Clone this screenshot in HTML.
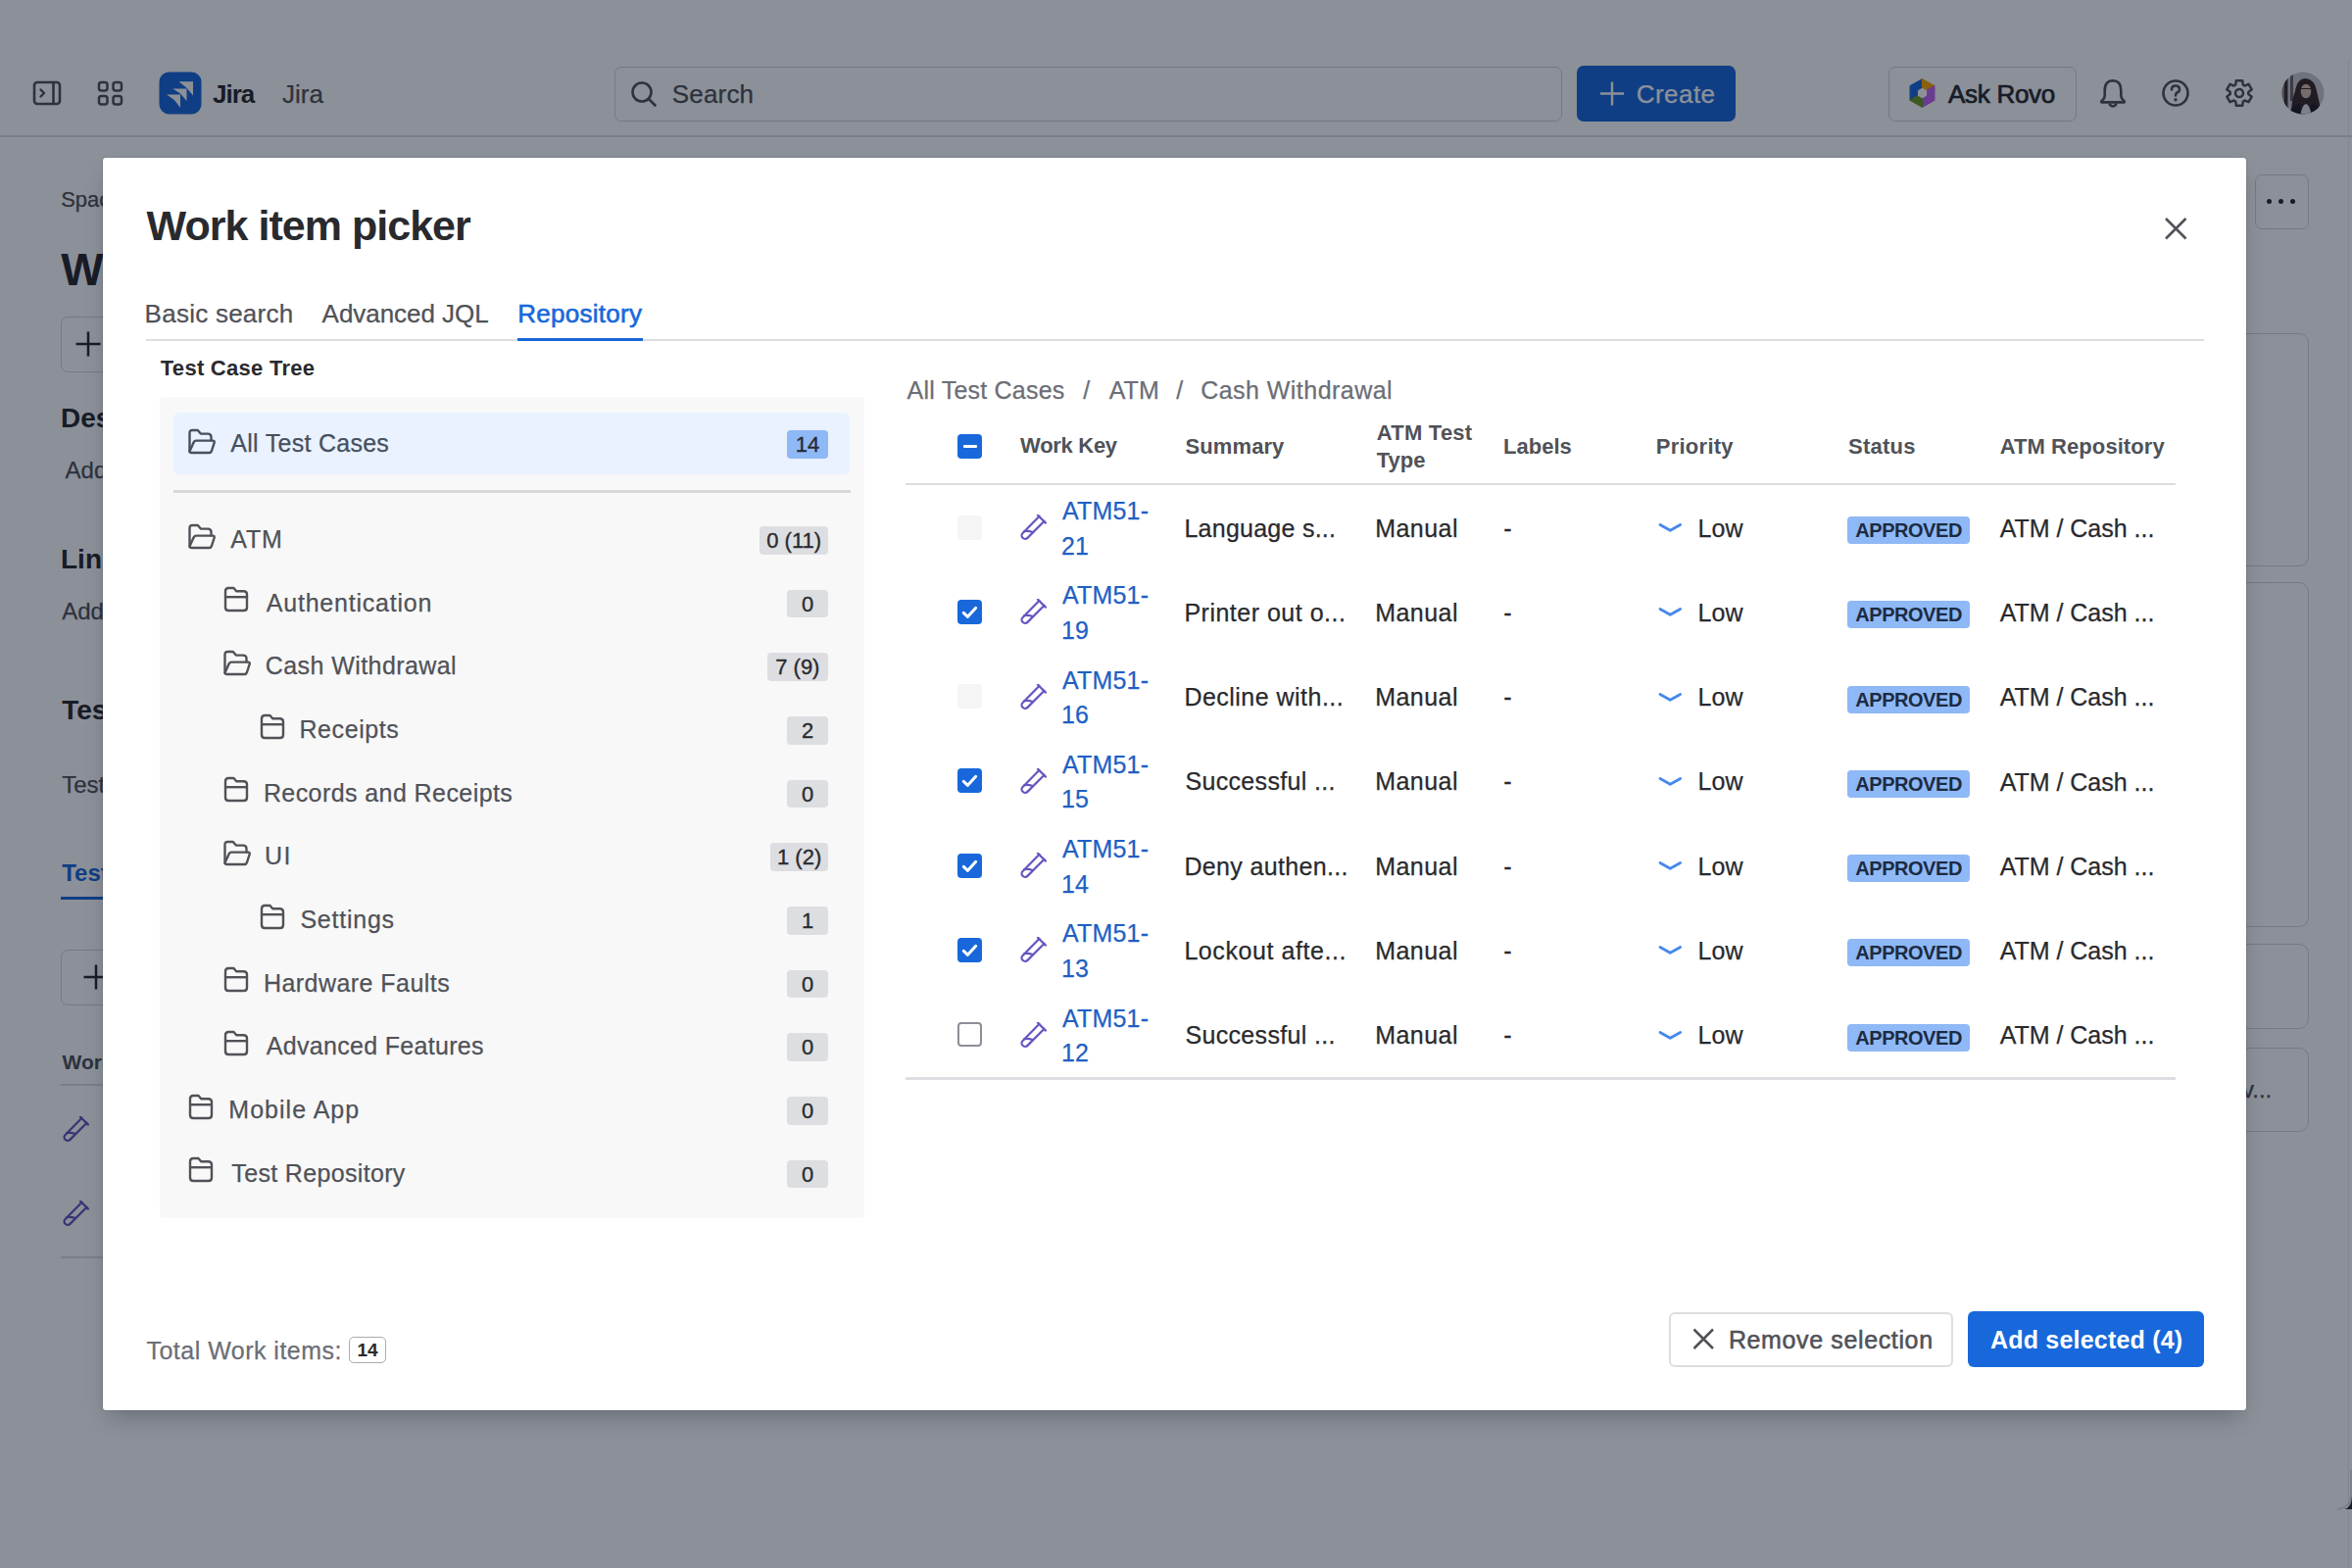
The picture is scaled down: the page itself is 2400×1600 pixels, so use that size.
<!DOCTYPE html><html><head><meta charset="utf-8"><title>Work item picker</title><style>
*{margin:0;padding:0;box-sizing:border-box}
html,body{width:2400px;height:1600px;overflow:hidden}
body{position:relative;background:#fff;font-family:"Liberation Sans",sans-serif}
.a{position:absolute;white-space:nowrap}
.b{position:absolute;display:block}
</style></head><body>
<div class="b" style="left:0.0px;top:138.0px;width:2400.0px;height:2.0px;background:#DDDEE1"></div>
<svg class="b" style="left:32.0px;top:81.0px" width="32" height="28" viewBox="0 0 32 28"><rect x="3" y="3" width="26" height="22" rx="3" fill="none" stroke="#505258" stroke-width="2.6"/><path d="M22.5 3v22" stroke="#505258" stroke-width="2.6"/><path d="M9.5 10.5l3.5 3.5-3.5 3.5" fill="none" stroke="#505258" stroke-width="2.4" stroke-linecap="round" stroke-linejoin="round"/></svg>
<svg class="b" style="left:98.0px;top:81.0px" width="30" height="30" viewBox="0 0 30 30"><rect x="3" y="3" width="8.5" height="8.5" rx="2.5" fill="none" stroke="#505258" stroke-width="2.5"/><rect x="3" y="17" width="8.5" height="8.5" rx="2.5" fill="none" stroke="#505258" stroke-width="2.5"/><rect x="17.5" y="3" width="8.5" height="8.5" rx="2.5" fill="none" stroke="#505258" stroke-width="2.5"/><rect x="17.5" y="17" width="8.5" height="8.5" rx="2.5" fill="none" stroke="#505258" stroke-width="2.5"/></svg>
<svg class="b" style="left:162.0px;top:73.0px" width="44" height="44" viewBox="0 0 44 44"><rect x="0.5" y="0.5" width="43" height="43" rx="10" fill="#1868DB"/><path d="M20.5 10.2H35V24.5L28.5 16.8Z" fill="#fff"/><path d="M14.3 17.4H28.5V30L22 22.6Z" fill="#fff"/><path d="M8 23.6H22V36.7L15.8 29Z" fill="#fff"/></svg>
<div class="a" style="left:217.0px;top:82.6px;font-size:26px;line-height:26px;color:#292A2E;font-weight:700;letter-spacing:-1.00px;">Jira</div>
<div class="a" style="left:288.0px;top:82.6px;font-size:26px;line-height:26px;color:#505258;-webkit-text-stroke:0.25px #505258;">Jira</div>
<div class="b" style="left:627.0px;top:68.0px;width:967.0px;height:56.0px;border:1.5px solid #D3D5D9;border-radius:7px;background:#fff"></div>
<svg class="b" style="left:642.0px;top:81.0px" width="30" height="30" viewBox="0 0 30 30"><circle cx="13" cy="13" r="9.5" fill="none" stroke="#505258" stroke-width="2.6"/><path d="M20 20l6.5 6.5" stroke="#505258" stroke-width="2.6" stroke-linecap="round"/></svg>
<div class="a" style="left:685.7px;top:82.7px;font-size:26px;line-height:26px;color:#505258;letter-spacing:0.20px;-webkit-text-stroke:0.25px #505258;">Search</div>
<div class="b" style="left:1609.0px;top:67.0px;width:162.0px;height:57.0px;background:#1868DB;border-radius:7px"></div>
<svg class="b" style="left:1630.0px;top:81.0px" width="30" height="30" viewBox="0 0 30 30"><path d="M15 2.5v24M3 14.5h24" stroke="#fff" stroke-width="2.4"/></svg>
<div class="a" style="left:1669.7px;top:82.7px;font-size:26px;line-height:26px;color:#fff;letter-spacing:0.46px;-webkit-text-stroke:0.25px #fff;">Create</div>
<div class="b" style="left:1927.0px;top:68.0px;width:192.0px;height:56.0px;border:1.5px solid #D3D5D9;border-radius:7px"></div>
<svg class="b" style="left:1946.0px;top:79.0px" width="31" height="32" viewBox="0 0 31 32"><path d="M3.12 23.15 L3.12 8.85 L15.50 1.70 L15.50 10.00 L10.30 13.00 L10.30 19.00Z" fill="#1868DB" stroke="#1868DB" stroke-width="1.2" stroke-linejoin="round"/><path d="M15.50 1.70 L27.88 8.85 L20.70 13.00 L15.50 10.00Z" fill="#FCA700" stroke="#FCA700" stroke-width="1.2" stroke-linejoin="round"/><path d="M27.88 8.85 L27.88 23.15 L15.50 30.30 L15.50 22.00 L20.70 19.00 L20.70 13.00Z" fill="#BF63F3" stroke="#BF63F3" stroke-width="1.2" stroke-linejoin="round"/><path d="M15.50 30.30 L3.12 23.15 L10.30 19.00 L15.50 22.00Z" fill="#6A9A23" stroke="#6A9A23" stroke-width="1.2" stroke-linejoin="round"/></svg>
<div class="a" style="left:1988.0px;top:82.6px;font-size:26px;line-height:26px;color:#292A2E;letter-spacing:-0.29px;-webkit-text-stroke:0.7px #292A2E;">Ask Rovo</div>
<svg class="b" style="left:2140.0px;top:79.0px" width="32" height="32" viewBox="0 0 32 32"><path d="M16 3.2Q24.2 3.3 24.3 13.2V18.6Q24.4 21.3 26.8 23.4Q28.2 24.8 27.6 25.4H4.4Q3.8 24.8 5.2 23.4Q7.6 21.3 7.7 18.6V13.2Q7.8 3.3 16 3.2Z" fill="none" stroke="#505258" stroke-width="2.6" stroke-linejoin="round"/><path d="M12.8 27.6Q16 31.4 19.2 27.6" fill="none" stroke="#505258" stroke-width="2.6" stroke-linecap="round"/></svg>
<svg class="b" style="left:2204.0px;top:79.0px" width="32" height="32" viewBox="0 0 32 32"><circle cx="16" cy="16" r="12.5" fill="none" stroke="#505258" stroke-width="2.6"/><path d="M12 12.5Q12 8.5 16 8.5Q20 8.5 20 12.3Q20 14.5 17.5 15.5Q16 16.2 16 18.5" fill="none" stroke="#505258" stroke-width="2.6" stroke-linecap="round"/><circle cx="16" cy="22.8" r="1.7" fill="#505258"/></svg>
<svg class="b" style="left:2269.0px;top:79.0px" width="32" height="32" viewBox="0 0 32 32"><path d="M12.81 3.19 L19.19 3.19 L19.78 7.50 L21.47 8.48 L25.50 6.83 L28.69 12.36 L25.25 15.03 L25.25 16.97 L28.69 19.64 L25.50 25.17 L21.47 23.52 L19.78 24.50 L19.19 28.81 L12.81 28.81 L12.22 24.50 L10.53 23.52 L6.50 25.17 L3.31 19.64 L6.75 16.97 L6.75 15.03 L3.31 12.36 L6.50 6.83 L10.53 8.48 L12.22 7.50Z" fill="none" stroke="#505258" stroke-width="2.5" stroke-linejoin="round"/><circle cx="16" cy="16" r="4" fill="none" stroke="#505258" stroke-width="2.5"/></svg>
<svg class="b" style="left:2328.0px;top:73.0px" width="44" height="44" viewBox="0 0 44 44"><defs><clipPath id="av"><circle cx="22" cy="22" r="21.5"/></clipPath></defs><g clip-path="url(#av)"><rect width="44" height="44" fill="#c9cacd"/><rect x="0" y="0" width="7" height="44" fill="#8b8585"/><rect x="3" y="0" width="3" height="44" fill="#3e3030"/><rect x="9" y="0" width="3" height="30" fill="#6e6060"/><path d="M10 44Q10 30 14 20Q16 7 25 7Q34 8 36 20Q39 32 41 44Z" fill="#3a2828"/><ellipse cx="25" cy="20" rx="5.3" ry="7.3" fill="#d6bcae"/><path d="M20 17.5H30" stroke="#3a3030" stroke-width="1"/><path d="M6 44Q11 34 19 33L22 44Z" fill="#1e1e22"/><path d="M44 44Q39 34 31 33L28 44Z" fill="#1e1e22"/><path d="M19.5 44Q21 34 25 33Q29 34 30.5 44Z" fill="#e4e4e8"/></g></svg>
<div class="a" style="left:62.2px;top:192.9px;font-size:22px;line-height:22px;color:#505258;-webkit-text-stroke:0.25px #505258;">Space</div>
<div class="a" style="left:62.2px;top:251.8px;font-size:46px;line-height:46px;color:#292A2E;font-weight:700;">Work</div>
<div class="b" style="left:62.0px;top:322.5px;width:78.0px;height:57.0px;border:1.5px solid #D3D5D9;border-radius:7px"></div>
<svg class="b" style="left:76.0px;top:337.0px" width="30" height="30" viewBox="0 0 30 30"><path d="M14 1.5v25M1.5 14h25" stroke="#292A2E" stroke-width="2.5"/></svg>
<div class="a" style="left:62.0px;top:412.7px;font-size:28px;line-height:28px;color:#292A2E;font-weight:700;">Description</div>
<div class="a" style="left:66.6px;top:468.4px;font-size:24px;line-height:24px;color:#505258;-webkit-text-stroke:0.25px #505258;">Add a description</div>
<div class="a" style="left:62.0px;top:557.1px;font-size:28px;line-height:28px;color:#292A2E;font-weight:700;">Linked work items</div>
<div class="a" style="left:63.2px;top:612.0px;font-size:24px;line-height:24px;color:#505258;-webkit-text-stroke:0.25px #505258;">Add linked work item</div>
<div class="a" style="left:63.2px;top:711.0px;font-size:28px;line-height:28px;color:#292A2E;font-weight:700;">Test details</div>
<div class="a" style="left:63.2px;top:789.1px;font-size:24px;line-height:24px;color:#505258;-webkit-text-stroke:0.25px #505258;">Test details</div>
<div class="a" style="left:63.2px;top:879.1px;font-size:24px;line-height:24px;color:#1868DB;font-weight:700;">Test steps</div>
<div class="b" style="left:62.0px;top:915.0px;width:78.0px;height:3.0px;background:#1868DB"></div>
<div class="b" style="left:62.0px;top:969.0px;width:78.0px;height:57.0px;border:1.5px solid #D3D5D9;border-radius:7px"></div>
<svg class="b" style="left:84.0px;top:983.0px" width="30" height="30" viewBox="0 0 30 30"><path d="M14 1.5v25M1.5 14h25" stroke="#292A2E" stroke-width="2.5"/></svg>
<div class="a" style="left:63.5px;top:1073.4px;font-size:21px;line-height:21px;color:#505258;font-weight:700;">Work item</div>
<div class="b" style="left:62.0px;top:1106.0px;width:78.0px;height:2.0px;background:#DDDEE1"></div>
<svg class="b" style="left:63.5px;top:1139.0px" width="27" height="27" viewBox="0 0 27 27"><path d="M18 0.8L26 8.6M19.6 1.7L2.6 18.9A3.5 3.5 0 0 0 7.5 23.9L24.6 6.7" fill="none" stroke="#6554C0" stroke-width="2.2" stroke-linecap="round" stroke-linejoin="round"/><path d="M4.3 17.1Q8.4 16.5 12.8 17.9" fill="none" stroke="#6554C0" stroke-width="2.1" stroke-linecap="round"/></svg>
<svg class="b" style="left:63.5px;top:1225.0px" width="27" height="27" viewBox="0 0 27 27"><path d="M18 0.8L26 8.6M19.6 1.7L2.6 18.9A3.5 3.5 0 0 0 7.5 23.9L24.6 6.7" fill="none" stroke="#6554C0" stroke-width="2.2" stroke-linecap="round" stroke-linejoin="round"/><path d="M4.3 17.1Q8.4 16.5 12.8 17.9" fill="none" stroke="#6554C0" stroke-width="2.1" stroke-linecap="round"/></svg>
<div class="b" style="left:62.0px;top:1282.0px;width:78.0px;height:2.0px;background:#DDDEE1"></div>
<div class="b" style="left:2301.0px;top:178.0px;width:55.0px;height:56.0px;border:1.5px solid #D3D5D9;border-radius:7px"></div>
<div class="b" style="left:2313.2px;top:202.9px;width:5.2px;height:5.2px;background:#292A2E;border-radius:50%"></div>
<div class="b" style="left:2325.0px;top:202.9px;width:5.2px;height:5.2px;background:#292A2E;border-radius:50%"></div>
<div class="b" style="left:2336.8px;top:202.9px;width:5.2px;height:5.2px;background:#292A2E;border-radius:50%"></div>
<div class="b" style="left:2200.0px;top:339.6px;width:156.0px;height:238.6px;border:1.5px solid #D3D5D9;border-radius:10px"></div>
<div class="b" style="left:2200.0px;top:593.5px;width:156.0px;height:352.8px;border:1.5px solid #D3D5D9;border-radius:10px"></div>
<div class="b" style="left:2200.0px;top:963.2px;width:156.0px;height:86.6px;border:1.5px solid #D3D5D9;border-radius:10px"></div>
<div class="b" style="left:2200.0px;top:1068.9px;width:156.0px;height:86.1px;border:1.5px solid #D3D5D9;border-radius:10px"></div>
<div class="a" style="left:2288.0px;top:1099.6px;font-size:24px;line-height:24px;color:#505258;-webkit-text-stroke:0.25px #505258;">v...</div>
<div class="b" style="left:2395.5px;top:60.0px;width:1.5px;height:1540.0px;background:#ECEDEF"></div>
<svg class="b" style="left:2380.0px;top:1500.0px" width="20" height="45" viewBox="0 0 20 45"><path d="M19 0V25Q19 38 5 40" fill="none" stroke="#DADBDE" stroke-width="1.5"/><path d="M20 26Q19.5 39 12 40H20Z" fill="#2a2b30"/></svg>
<div class="b" style="left:0.0px;top:0.0px;width:2400.0px;height:1600.0px;background:rgba(5,12,31,0.459)"></div>
<div class="b" style="left:105.0px;top:161.0px;width:2187.0px;height:1278.0px;background:#fff;border-radius:3px;box-shadow:0 12px 22px -6px rgba(5,12,31,0.26),0 0 1.5px rgba(5,12,31,0.35)"></div>
<div class="a" style="left:149.6px;top:208.8px;font-size:43px;line-height:43px;color:#292A2E;font-weight:700;letter-spacing:-0.97px;">Work item picker</div>
<svg class="b" style="left:2206.0px;top:219.0px" width="28" height="28" viewBox="0 0 28 28"><path d="M4 4L24.5 24.5M24.5 4L4 24.5" stroke="#505258" stroke-width="2.6"/></svg>
<div class="a" style="left:147.6px;top:306.9px;font-size:26px;line-height:26px;color:#505258;letter-spacing:0.25px;-webkit-text-stroke:0.25px #505258;">Basic search</div>
<div class="a" style="left:328.6px;top:306.9px;font-size:26px;line-height:26px;color:#505258;letter-spacing:-0.04px;-webkit-text-stroke:0.25px #505258;">Advanced JQL</div>
<div class="a" style="left:528.3px;top:306.9px;font-size:26px;line-height:26px;color:#1868DB;letter-spacing:0.26px;-webkit-text-stroke:0.6px #1868DB;">Repository</div>
<div class="b" style="left:149.0px;top:346.0px;width:2100.0px;height:2.0px;background:#DDDEE1"></div>
<div class="b" style="left:528.0px;top:345.0px;width:128.0px;height:3.0px;background:#1868DB"></div>
<div class="a" style="left:163.8px;top:365.1px;font-size:22px;line-height:22px;color:#292A2E;font-weight:700;letter-spacing:0.27px;">Test Case Tree</div>
<div class="b" style="left:163.0px;top:405.0px;width:719.0px;height:838.0px;background:#F8F8F8;border-radius:4px"></div>
<div class="b" style="left:177.0px;top:421.0px;width:690.0px;height:63.0px;background:#E9F2FE;border-radius:6px"></div>
<div class="b" style="left:177.0px;top:499.5px;width:691.0px;height:3.0px;background:#D8D9DB"></div>
<svg class="b" style="left:191.0px;top:436.6px" width="30" height="27" viewBox="0 0 30 27"><path d="M2.5 23.5V5Q2.5 2 5.5 2H10.8L13.8 5.6H21Q24.5 5.6 24.5 9V12.3" fill="none" stroke="#46505E" stroke-width="2.4" stroke-linejoin="round" stroke-linecap="round"/><path d="M2.5 23.5L6.6 14.6Q7.3 12.6 9.3 12.6H26Q28.3 12.6 27.6 14.8L25 23Q24.3 25 22.3 25H4.5Q2.5 25 2.5 23.5Z" fill="none" stroke="#46505E" stroke-width="2.4" stroke-linejoin="round"/></svg>
<div class="a" style="left:235.3px;top:440.4px;font-size:25px;line-height:25px;color:#46505E;letter-spacing:0.28px;-webkit-text-stroke:0.25px #46505E;">All Test Cases</div>
<div class="b" style="left:802.9px;top:439.4px;width:42.1px;height:28.9px;background:#8FB8F6;border-radius:4px"></div>
<div class="a" style="left:802.9px;top:439.4px;width:42.1px;height:28.9px;line-height:29.5px;text-align:center;font-size:22px;color:#292A2E;-webkit-text-stroke:0.35px #292A2E">14</div>
<svg class="b" style="left:191.0px;top:534.0px" width="30" height="27" viewBox="0 0 30 27"><path d="M2.5 23.5V5Q2.5 2 5.5 2H10.8L13.8 5.6H21Q24.5 5.6 24.5 9V12.3" fill="none" stroke="#505258" stroke-width="2.4" stroke-linejoin="round" stroke-linecap="round"/><path d="M2.5 23.5L6.6 14.6Q7.3 12.6 9.3 12.6H26Q28.3 12.6 27.6 14.8L25 23Q24.3 25 22.3 25H4.5Q2.5 25 2.5 23.5Z" fill="none" stroke="#505258" stroke-width="2.4" stroke-linejoin="round"/></svg>
<div class="a" style="left:235.3px;top:537.8px;font-size:25px;line-height:25px;color:#505258;letter-spacing:0.85px;-webkit-text-stroke:0.25px #505258;">ATM</div>
<div class="b" style="left:775.3px;top:536.8px;width:69.7px;height:28.9px;background:#DDDEE1;border-radius:4px"></div>
<div class="a" style="left:775.3px;top:536.8px;width:69.7px;height:28.9px;line-height:29.5px;text-align:center;font-size:22px;color:#292A2E;-webkit-text-stroke:0.35px #292A2E">0 (11)</div>
<svg class="b" style="left:228.0px;top:598.2px" width="27" height="27" viewBox="0 0 27 27"><path d="M2 5.3Q2 2 5.3 2H10.5L13.2 5.2H20.5Q24 5.2 24 8.5V21.7Q24 25 20.7 25H5.3Q2 25 2 21.7Z" fill="none" stroke="#505258" stroke-width="2.4" stroke-linejoin="round"/><path d="M2 11.2H24" stroke="#505258" stroke-width="2.4"/></svg>
<div class="a" style="left:271.8px;top:602.5px;font-size:25px;line-height:25px;color:#505258;letter-spacing:0.78px;-webkit-text-stroke:0.25px #505258;">Authentication</div>
<div class="b" style="left:803.0px;top:601.5px;width:42.0px;height:28.9px;background:#DDDEE1;border-radius:4px"></div>
<div class="a" style="left:803.0px;top:601.5px;width:42.0px;height:28.9px;line-height:29.5px;text-align:center;font-size:22px;color:#292A2E;-webkit-text-stroke:0.35px #292A2E">0</div>
<svg class="b" style="left:227.0px;top:663.3px" width="30" height="27" viewBox="0 0 30 27"><path d="M2.5 23.5V5Q2.5 2 5.5 2H10.8L13.8 5.6H21Q24.5 5.6 24.5 9V12.3" fill="none" stroke="#505258" stroke-width="2.4" stroke-linejoin="round" stroke-linecap="round"/><path d="M2.5 23.5L6.6 14.6Q7.3 12.6 9.3 12.6H26Q28.3 12.6 27.6 14.8L25 23Q24.3 25 22.3 25H4.5Q2.5 25 2.5 23.5Z" fill="none" stroke="#505258" stroke-width="2.4" stroke-linejoin="round"/></svg>
<div class="a" style="left:270.8px;top:667.0px;font-size:25px;line-height:25px;color:#505258;letter-spacing:0.42px;-webkit-text-stroke:0.25px #505258;">Cash Withdrawal</div>
<div class="b" style="left:782.7px;top:666.1px;width:62.3px;height:28.9px;background:#DDDEE1;border-radius:4px"></div>
<div class="a" style="left:782.7px;top:666.1px;width:62.3px;height:28.9px;line-height:29.5px;text-align:center;font-size:22px;color:#292A2E;-webkit-text-stroke:0.35px #292A2E">7 (9)</div>
<svg class="b" style="left:265.0px;top:727.5px" width="27" height="27" viewBox="0 0 27 27"><path d="M2 5.3Q2 2 5.3 2H10.5L13.2 5.2H20.5Q24 5.2 24 8.5V21.7Q24 25 20.7 25H5.3Q2 25 2 21.7Z" fill="none" stroke="#505258" stroke-width="2.4" stroke-linejoin="round"/><path d="M2 11.2H24" stroke="#505258" stroke-width="2.4"/></svg>
<div class="a" style="left:305.4px;top:731.8px;font-size:25px;line-height:25px;color:#505258;letter-spacing:0.60px;-webkit-text-stroke:0.25px #505258;">Receipts</div>
<div class="b" style="left:803.0px;top:730.8px;width:42.0px;height:28.9px;background:#DDDEE1;border-radius:4px"></div>
<div class="a" style="left:803.0px;top:730.8px;width:42.0px;height:28.9px;line-height:29.5px;text-align:center;font-size:22px;color:#292A2E;-webkit-text-stroke:0.35px #292A2E">2</div>
<svg class="b" style="left:228.0px;top:792.2px" width="27" height="27" viewBox="0 0 27 27"><path d="M2 5.3Q2 2 5.3 2H10.5L13.2 5.2H20.5Q24 5.2 24 8.5V21.7Q24 25 20.7 25H5.3Q2 25 2 21.7Z" fill="none" stroke="#505258" stroke-width="2.4" stroke-linejoin="round"/><path d="M2 11.2H24" stroke="#505258" stroke-width="2.4"/></svg>
<div class="a" style="left:268.9px;top:796.5px;font-size:25px;line-height:25px;color:#505258;letter-spacing:0.42px;-webkit-text-stroke:0.25px #505258;">Records and Receipts</div>
<div class="b" style="left:803.0px;top:795.5px;width:42.0px;height:28.9px;background:#DDDEE1;border-radius:4px"></div>
<div class="a" style="left:803.0px;top:795.5px;width:42.0px;height:28.9px;line-height:29.5px;text-align:center;font-size:22px;color:#292A2E;-webkit-text-stroke:0.35px #292A2E">0</div>
<svg class="b" style="left:227.0px;top:857.4px" width="30" height="27" viewBox="0 0 30 27"><path d="M2.5 23.5V5Q2.5 2 5.5 2H10.8L13.8 5.6H21Q24.5 5.6 24.5 9V12.3" fill="none" stroke="#505258" stroke-width="2.4" stroke-linejoin="round" stroke-linecap="round"/><path d="M2.5 23.5L6.6 14.6Q7.3 12.6 9.3 12.6H26Q28.3 12.6 27.6 14.8L25 23Q24.3 25 22.3 25H4.5Q2.5 25 2.5 23.5Z" fill="none" stroke="#505258" stroke-width="2.4" stroke-linejoin="round"/></svg>
<div class="a" style="left:269.9px;top:861.1px;font-size:25px;line-height:25px;color:#505258;letter-spacing:1.50px;-webkit-text-stroke:0.25px #505258;">UI</div>
<div class="b" style="left:786.3px;top:860.2px;width:58.7px;height:28.9px;background:#DDDEE1;border-radius:4px"></div>
<div class="a" style="left:786.3px;top:860.2px;width:58.7px;height:28.9px;line-height:29.5px;text-align:center;font-size:22px;color:#292A2E;-webkit-text-stroke:0.35px #292A2E">1 (2)</div>
<svg class="b" style="left:265.0px;top:921.5px" width="27" height="27" viewBox="0 0 27 27"><path d="M2 5.3Q2 2 5.3 2H10.5L13.2 5.2H20.5Q24 5.2 24 8.5V21.7Q24 25 20.7 25H5.3Q2 25 2 21.7Z" fill="none" stroke="#505258" stroke-width="2.4" stroke-linejoin="round"/><path d="M2 11.2H24" stroke="#505258" stroke-width="2.4"/></svg>
<div class="a" style="left:306.4px;top:925.8px;font-size:25px;line-height:25px;color:#505258;letter-spacing:0.76px;-webkit-text-stroke:0.25px #505258;">Settings</div>
<div class="b" style="left:803.0px;top:924.8px;width:42.0px;height:28.9px;background:#DDDEE1;border-radius:4px"></div>
<div class="a" style="left:803.0px;top:924.8px;width:42.0px;height:28.9px;line-height:29.5px;text-align:center;font-size:22px;color:#292A2E;-webkit-text-stroke:0.35px #292A2E">1</div>
<svg class="b" style="left:228.0px;top:986.2px" width="27" height="27" viewBox="0 0 27 27"><path d="M2 5.3Q2 2 5.3 2H10.5L13.2 5.2H20.5Q24 5.2 24 8.5V21.7Q24 25 20.7 25H5.3Q2 25 2 21.7Z" fill="none" stroke="#505258" stroke-width="2.4" stroke-linejoin="round"/><path d="M2 11.2H24" stroke="#505258" stroke-width="2.4"/></svg>
<div class="a" style="left:268.9px;top:990.5px;font-size:25px;line-height:25px;color:#505258;letter-spacing:0.46px;-webkit-text-stroke:0.25px #505258;">Hardware Faults</div>
<div class="b" style="left:803.0px;top:989.5px;width:42.0px;height:28.9px;background:#DDDEE1;border-radius:4px"></div>
<div class="a" style="left:803.0px;top:989.5px;width:42.0px;height:28.9px;line-height:29.5px;text-align:center;font-size:22px;color:#292A2E;-webkit-text-stroke:0.35px #292A2E">0</div>
<svg class="b" style="left:228.0px;top:1050.9px" width="27" height="27" viewBox="0 0 27 27"><path d="M2 5.3Q2 2 5.3 2H10.5L13.2 5.2H20.5Q24 5.2 24 8.5V21.7Q24 25 20.7 25H5.3Q2 25 2 21.7Z" fill="none" stroke="#505258" stroke-width="2.4" stroke-linejoin="round"/><path d="M2 11.2H24" stroke="#505258" stroke-width="2.4"/></svg>
<div class="a" style="left:271.8px;top:1055.2px;font-size:25px;line-height:25px;color:#505258;letter-spacing:0.31px;-webkit-text-stroke:0.25px #505258;">Advanced Features</div>
<div class="b" style="left:803.0px;top:1054.2px;width:42.0px;height:28.9px;background:#DDDEE1;border-radius:4px"></div>
<div class="a" style="left:803.0px;top:1054.2px;width:42.0px;height:28.9px;line-height:29.5px;text-align:center;font-size:22px;color:#292A2E;-webkit-text-stroke:0.35px #292A2E">0</div>
<svg class="b" style="left:192.0px;top:1115.5px" width="27" height="27" viewBox="0 0 27 27"><path d="M2 5.3Q2 2 5.3 2H10.5L13.2 5.2H20.5Q24 5.2 24 8.5V21.7Q24 25 20.7 25H5.3Q2 25 2 21.7Z" fill="none" stroke="#505258" stroke-width="2.4" stroke-linejoin="round"/><path d="M2 11.2H24" stroke="#505258" stroke-width="2.4"/></svg>
<div class="a" style="left:233.3px;top:1119.8px;font-size:25px;line-height:25px;color:#505258;letter-spacing:1.02px;-webkit-text-stroke:0.25px #505258;">Mobile App</div>
<div class="b" style="left:803.0px;top:1118.8px;width:42.0px;height:28.9px;background:#DDDEE1;border-radius:4px"></div>
<div class="a" style="left:803.0px;top:1118.8px;width:42.0px;height:28.9px;line-height:29.5px;text-align:center;font-size:22px;color:#292A2E;-webkit-text-stroke:0.35px #292A2E">0</div>
<svg class="b" style="left:192.0px;top:1180.2px" width="27" height="27" viewBox="0 0 27 27"><path d="M2 5.3Q2 2 5.3 2H10.5L13.2 5.2H20.5Q24 5.2 24 8.5V21.7Q24 25 20.7 25H5.3Q2 25 2 21.7Z" fill="none" stroke="#505258" stroke-width="2.4" stroke-linejoin="round"/><path d="M2 11.2H24" stroke="#505258" stroke-width="2.4"/></svg>
<div class="a" style="left:236.3px;top:1184.5px;font-size:25px;line-height:25px;color:#505258;letter-spacing:0.34px;-webkit-text-stroke:0.25px #505258;">Test Repository</div>
<div class="b" style="left:803.0px;top:1183.5px;width:42.0px;height:28.9px;background:#DDDEE1;border-radius:4px"></div>
<div class="a" style="left:803.0px;top:1183.5px;width:42.0px;height:28.9px;line-height:29.5px;text-align:center;font-size:22px;color:#292A2E;-webkit-text-stroke:0.35px #292A2E">0</div>
<div class="a" style="left:925.5px;top:386.4px;font-size:25px;line-height:25px;color:#6B6E76;letter-spacing:0.22px;-webkit-text-stroke:0.25px #6B6E76;">All Test Cases</div>
<div class="a" style="left:1105.2px;top:386.4px;font-size:25px;line-height:25px;color:#6B6E76;-webkit-text-stroke:0.25px #6B6E76;">/</div>
<div class="a" style="left:1131.8px;top:386.4px;font-size:25px;line-height:25px;color:#6B6E76;-webkit-text-stroke:0.25px #6B6E76;">ATM</div>
<div class="a" style="left:1200.2px;top:386.4px;font-size:25px;line-height:25px;color:#6B6E76;-webkit-text-stroke:0.25px #6B6E76;">/</div>
<div class="a" style="left:1225.2px;top:386.4px;font-size:25px;line-height:25px;color:#6B6E76;letter-spacing:0.46px;-webkit-text-stroke:0.25px #6B6E76;">Cash Withdrawal</div>
<div class="b" style="left:977.0px;top:443.0px;width:25.0px;height:25.0px;background:#1868DB;border-radius:4px"></div>
<div class="b" style="left:982.5px;top:454.0px;width:14.0px;height:3.0px;background:#fff;border-radius:1px"></div>
<div class="a" style="left:1041.1px;top:444.3px;font-size:22px;line-height:22px;color:#505258;font-weight:700;letter-spacing:-0.30px;">Work Key</div>
<div class="a" style="left:1209.6px;top:444.5px;font-size:22px;line-height:22px;color:#505258;font-weight:700;letter-spacing:0.08px;">Summary</div>
<div class="a" style="left:1404.8px;top:430.6px;font-size:22px;line-height:22px;color:#505258;font-weight:700;letter-spacing:0.23px;">ATM Test</div>
<div class="a" style="left:1404.8px;top:459.1px;font-size:22px;line-height:22px;color:#505258;font-weight:700;">Type</div>
<div class="a" style="left:1534.1px;top:444.6px;font-size:22px;line-height:22px;color:#505258;font-weight:700;">Labels</div>
<div class="a" style="left:1689.7px;top:444.6px;font-size:22px;line-height:22px;color:#505258;font-weight:700;letter-spacing:0.27px;">Priority</div>
<div class="a" style="left:1886.0px;top:444.6px;font-size:22px;line-height:22px;color:#505258;font-weight:700;letter-spacing:0.26px;">Status</div>
<div class="a" style="left:2040.7px;top:444.6px;font-size:22px;line-height:22px;color:#505258;font-weight:700;letter-spacing:0.07px;">ATM Repository</div>
<div class="b" style="left:924.0px;top:492.5px;width:1296.0px;height:2.5px;background:#DDDEE1"></div>
<div class="b" style="left:977.0px;top:525.5px;width:25.0px;height:25.0px;background:#F5F5F6;border-radius:4px"></div>
<svg class="b" style="left:1040.5px;top:525.0px" width="27" height="27" viewBox="0 0 27 27"><path d="M18 0.8L26 8.6M19.6 1.7L2.6 18.9A3.5 3.5 0 0 0 7.5 23.9L24.6 6.7" fill="none" stroke="#6554C0" stroke-width="2.2" stroke-linecap="round" stroke-linejoin="round"/><path d="M4.3 17.1Q8.4 16.5 12.8 17.9" fill="none" stroke="#6554C0" stroke-width="2.1" stroke-linecap="round"/></svg>
<div class="a" style="left:1084.0px;top:509.0px;font-size:25px;line-height:25px;color:#1F5FC4;letter-spacing:0.20px;-webkit-text-stroke:0.25px #1F5FC4;">ATM51-</div>
<div class="a" style="left:1083.0px;top:544.6px;font-size:25px;line-height:25px;color:#1F5FC4;-webkit-text-stroke:0.25px #1F5FC4;">21</div>
<div class="a" style="left:1208.4px;top:526.5px;font-size:25px;line-height:25px;color:#292A2E;letter-spacing:0.26px;-webkit-text-stroke:0.25px #292A2E;">Language s...</div>
<div class="a" style="left:1403.2px;top:526.5px;font-size:25px;line-height:25px;color:#292A2E;letter-spacing:0.46px;-webkit-text-stroke:0.25px #292A2E;">Manual</div>
<div class="a" style="left:1534.3px;top:526.5px;font-size:25px;line-height:25px;color:#292A2E;-webkit-text-stroke:0.25px #292A2E;">-</div>
<svg class="b" style="left:1691.0px;top:532.0px" width="27" height="14" viewBox="0 0 27 14"><path d="M3 3.5L13.3 9.3L23.6 3.5" fill="none" stroke="#4688EC" stroke-width="2.8" stroke-linecap="round" stroke-linejoin="round"/></svg>
<div class="a" style="left:1732.4px;top:526.5px;font-size:25px;line-height:25px;color:#292A2E;letter-spacing:0.10px;-webkit-text-stroke:0.25px #292A2E;">Low</div>
<div class="b" style="left:1885.0px;top:527.0px;width:125.0px;height:28.1px;background:#8FB8F6;border-radius:4px"></div>
<div class="a" style="left:1893.3px;top:531.0px;font-size:20px;line-height:20px;color:#1C2B42;font-weight:700;letter-spacing:-0.46px;">APPROVED</div>
<div class="a" style="left:2040.7px;top:526.8px;font-size:25px;line-height:25px;color:#292A2E;letter-spacing:-0.02px;-webkit-text-stroke:0.25px #292A2E;">ATM / Cash ...</div>
<div class="b" style="left:977.0px;top:611.8px;width:25.0px;height:25.0px;background:#1868DB;border-radius:4px"></div>
<svg class="b" style="left:977.0px;top:611.8px" width="25" height="25" viewBox="0 0 25 25"><path d="M6.3 13.3L10.5 17.3L18.7 8.3" fill="none" stroke="#fff" stroke-width="3" stroke-linecap="round" stroke-linejoin="round"/></svg>
<svg class="b" style="left:1040.5px;top:611.2px" width="27" height="27" viewBox="0 0 27 27"><path d="M18 0.8L26 8.6M19.6 1.7L2.6 18.9A3.5 3.5 0 0 0 7.5 23.9L24.6 6.7" fill="none" stroke="#6554C0" stroke-width="2.2" stroke-linecap="round" stroke-linejoin="round"/><path d="M4.3 17.1Q8.4 16.5 12.8 17.9" fill="none" stroke="#6554C0" stroke-width="2.1" stroke-linecap="round"/></svg>
<div class="a" style="left:1084.0px;top:595.3px;font-size:25px;line-height:25px;color:#1F5FC4;letter-spacing:0.20px;-webkit-text-stroke:0.25px #1F5FC4;">ATM51-</div>
<div class="a" style="left:1083.0px;top:630.9px;font-size:25px;line-height:25px;color:#1F5FC4;-webkit-text-stroke:0.25px #1F5FC4;">19</div>
<div class="a" style="left:1208.4px;top:612.8px;font-size:25px;line-height:25px;color:#292A2E;letter-spacing:0.50px;-webkit-text-stroke:0.25px #292A2E;">Printer out o...</div>
<div class="a" style="left:1403.2px;top:612.8px;font-size:25px;line-height:25px;color:#292A2E;letter-spacing:0.46px;-webkit-text-stroke:0.25px #292A2E;">Manual</div>
<div class="a" style="left:1534.3px;top:612.8px;font-size:25px;line-height:25px;color:#292A2E;-webkit-text-stroke:0.25px #292A2E;">-</div>
<svg class="b" style="left:1691.0px;top:618.2px" width="27" height="14" viewBox="0 0 27 14"><path d="M3 3.5L13.3 9.3L23.6 3.5" fill="none" stroke="#4688EC" stroke-width="2.8" stroke-linecap="round" stroke-linejoin="round"/></svg>
<div class="a" style="left:1732.4px;top:612.8px;font-size:25px;line-height:25px;color:#292A2E;letter-spacing:0.10px;-webkit-text-stroke:0.25px #292A2E;">Low</div>
<div class="b" style="left:1885.0px;top:613.2px;width:125.0px;height:28.1px;background:#8FB8F6;border-radius:4px"></div>
<div class="a" style="left:1893.3px;top:617.2px;font-size:20px;line-height:20px;color:#1C2B42;font-weight:700;letter-spacing:-0.46px;">APPROVED</div>
<div class="a" style="left:2040.7px;top:613.0px;font-size:25px;line-height:25px;color:#292A2E;letter-spacing:-0.02px;-webkit-text-stroke:0.25px #292A2E;">ATM / Cash ...</div>
<div class="b" style="left:977.0px;top:698.0px;width:25.0px;height:25.0px;background:#F5F5F6;border-radius:4px"></div>
<svg class="b" style="left:1040.5px;top:697.5px" width="27" height="27" viewBox="0 0 27 27"><path d="M18 0.8L26 8.6M19.6 1.7L2.6 18.9A3.5 3.5 0 0 0 7.5 23.9L24.6 6.7" fill="none" stroke="#6554C0" stroke-width="2.2" stroke-linecap="round" stroke-linejoin="round"/><path d="M4.3 17.1Q8.4 16.5 12.8 17.9" fill="none" stroke="#6554C0" stroke-width="2.1" stroke-linecap="round"/></svg>
<div class="a" style="left:1084.0px;top:681.5px;font-size:25px;line-height:25px;color:#1F5FC4;letter-spacing:0.20px;-webkit-text-stroke:0.25px #1F5FC4;">ATM51-</div>
<div class="a" style="left:1083.0px;top:717.1px;font-size:25px;line-height:25px;color:#1F5FC4;-webkit-text-stroke:0.25px #1F5FC4;">16</div>
<div class="a" style="left:1208.4px;top:699.0px;font-size:25px;line-height:25px;color:#292A2E;letter-spacing:0.48px;-webkit-text-stroke:0.25px #292A2E;">Decline with...</div>
<div class="a" style="left:1403.2px;top:699.0px;font-size:25px;line-height:25px;color:#292A2E;letter-spacing:0.46px;-webkit-text-stroke:0.25px #292A2E;">Manual</div>
<div class="a" style="left:1534.3px;top:699.0px;font-size:25px;line-height:25px;color:#292A2E;-webkit-text-stroke:0.25px #292A2E;">-</div>
<svg class="b" style="left:1691.0px;top:704.5px" width="27" height="14" viewBox="0 0 27 14"><path d="M3 3.5L13.3 9.3L23.6 3.5" fill="none" stroke="#4688EC" stroke-width="2.8" stroke-linecap="round" stroke-linejoin="round"/></svg>
<div class="a" style="left:1732.4px;top:699.0px;font-size:25px;line-height:25px;color:#292A2E;letter-spacing:0.10px;-webkit-text-stroke:0.25px #292A2E;">Low</div>
<div class="b" style="left:1885.0px;top:699.5px;width:125.0px;height:28.1px;background:#8FB8F6;border-radius:4px"></div>
<div class="a" style="left:1893.3px;top:703.5px;font-size:20px;line-height:20px;color:#1C2B42;font-weight:700;letter-spacing:-0.46px;">APPROVED</div>
<div class="a" style="left:2040.7px;top:699.2px;font-size:25px;line-height:25px;color:#292A2E;letter-spacing:-0.02px;-webkit-text-stroke:0.25px #292A2E;">ATM / Cash ...</div>
<div class="b" style="left:977.0px;top:784.2px;width:25.0px;height:25.0px;background:#1868DB;border-radius:4px"></div>
<svg class="b" style="left:977.0px;top:784.2px" width="25" height="25" viewBox="0 0 25 25"><path d="M6.3 13.3L10.5 17.3L18.7 8.3" fill="none" stroke="#fff" stroke-width="3" stroke-linecap="round" stroke-linejoin="round"/></svg>
<svg class="b" style="left:1040.5px;top:783.8px" width="27" height="27" viewBox="0 0 27 27"><path d="M18 0.8L26 8.6M19.6 1.7L2.6 18.9A3.5 3.5 0 0 0 7.5 23.9L24.6 6.7" fill="none" stroke="#6554C0" stroke-width="2.2" stroke-linecap="round" stroke-linejoin="round"/><path d="M4.3 17.1Q8.4 16.5 12.8 17.9" fill="none" stroke="#6554C0" stroke-width="2.1" stroke-linecap="round"/></svg>
<div class="a" style="left:1084.0px;top:767.8px;font-size:25px;line-height:25px;color:#1F5FC4;letter-spacing:0.20px;-webkit-text-stroke:0.25px #1F5FC4;">ATM51-</div>
<div class="a" style="left:1083.0px;top:803.4px;font-size:25px;line-height:25px;color:#1F5FC4;-webkit-text-stroke:0.25px #1F5FC4;">15</div>
<div class="a" style="left:1209.4px;top:785.3px;font-size:25px;line-height:25px;color:#292A2E;letter-spacing:0.34px;-webkit-text-stroke:0.25px #292A2E;">Successful ...</div>
<div class="a" style="left:1403.2px;top:785.3px;font-size:25px;line-height:25px;color:#292A2E;letter-spacing:0.46px;-webkit-text-stroke:0.25px #292A2E;">Manual</div>
<div class="a" style="left:1534.3px;top:785.3px;font-size:25px;line-height:25px;color:#292A2E;-webkit-text-stroke:0.25px #292A2E;">-</div>
<svg class="b" style="left:1691.0px;top:790.8px" width="27" height="14" viewBox="0 0 27 14"><path d="M3 3.5L13.3 9.3L23.6 3.5" fill="none" stroke="#4688EC" stroke-width="2.8" stroke-linecap="round" stroke-linejoin="round"/></svg>
<div class="a" style="left:1732.4px;top:785.3px;font-size:25px;line-height:25px;color:#292A2E;letter-spacing:0.10px;-webkit-text-stroke:0.25px #292A2E;">Low</div>
<div class="b" style="left:1885.0px;top:785.8px;width:125.0px;height:28.1px;background:#8FB8F6;border-radius:4px"></div>
<div class="a" style="left:1893.3px;top:789.8px;font-size:20px;line-height:20px;color:#1C2B42;font-weight:700;letter-spacing:-0.46px;">APPROVED</div>
<div class="a" style="left:2040.7px;top:785.5px;font-size:25px;line-height:25px;color:#292A2E;letter-spacing:-0.02px;-webkit-text-stroke:0.25px #292A2E;">ATM / Cash ...</div>
<div class="b" style="left:977.0px;top:870.5px;width:25.0px;height:25.0px;background:#1868DB;border-radius:4px"></div>
<svg class="b" style="left:977.0px;top:870.5px" width="25" height="25" viewBox="0 0 25 25"><path d="M6.3 13.3L10.5 17.3L18.7 8.3" fill="none" stroke="#fff" stroke-width="3" stroke-linecap="round" stroke-linejoin="round"/></svg>
<svg class="b" style="left:1040.5px;top:870.0px" width="27" height="27" viewBox="0 0 27 27"><path d="M18 0.8L26 8.6M19.6 1.7L2.6 18.9A3.5 3.5 0 0 0 7.5 23.9L24.6 6.7" fill="none" stroke="#6554C0" stroke-width="2.2" stroke-linecap="round" stroke-linejoin="round"/><path d="M4.3 17.1Q8.4 16.5 12.8 17.9" fill="none" stroke="#6554C0" stroke-width="2.1" stroke-linecap="round"/></svg>
<div class="a" style="left:1084.0px;top:854.0px;font-size:25px;line-height:25px;color:#1F5FC4;letter-spacing:0.20px;-webkit-text-stroke:0.25px #1F5FC4;">ATM51-</div>
<div class="a" style="left:1083.0px;top:889.6px;font-size:25px;line-height:25px;color:#1F5FC4;-webkit-text-stroke:0.25px #1F5FC4;">14</div>
<div class="a" style="left:1208.4px;top:871.5px;font-size:25px;line-height:25px;color:#292A2E;letter-spacing:0.35px;-webkit-text-stroke:0.25px #292A2E;">Deny authen...</div>
<div class="a" style="left:1403.2px;top:871.5px;font-size:25px;line-height:25px;color:#292A2E;letter-spacing:0.46px;-webkit-text-stroke:0.25px #292A2E;">Manual</div>
<div class="a" style="left:1534.3px;top:871.5px;font-size:25px;line-height:25px;color:#292A2E;-webkit-text-stroke:0.25px #292A2E;">-</div>
<svg class="b" style="left:1691.0px;top:877.0px" width="27" height="14" viewBox="0 0 27 14"><path d="M3 3.5L13.3 9.3L23.6 3.5" fill="none" stroke="#4688EC" stroke-width="2.8" stroke-linecap="round" stroke-linejoin="round"/></svg>
<div class="a" style="left:1732.4px;top:871.5px;font-size:25px;line-height:25px;color:#292A2E;letter-spacing:0.10px;-webkit-text-stroke:0.25px #292A2E;">Low</div>
<div class="b" style="left:1885.0px;top:872.0px;width:125.0px;height:28.1px;background:#8FB8F6;border-radius:4px"></div>
<div class="a" style="left:1893.3px;top:876.0px;font-size:20px;line-height:20px;color:#1C2B42;font-weight:700;letter-spacing:-0.46px;">APPROVED</div>
<div class="a" style="left:2040.7px;top:871.8px;font-size:25px;line-height:25px;color:#292A2E;letter-spacing:-0.02px;-webkit-text-stroke:0.25px #292A2E;">ATM / Cash ...</div>
<div class="b" style="left:977.0px;top:956.8px;width:25.0px;height:25.0px;background:#1868DB;border-radius:4px"></div>
<svg class="b" style="left:977.0px;top:956.8px" width="25" height="25" viewBox="0 0 25 25"><path d="M6.3 13.3L10.5 17.3L18.7 8.3" fill="none" stroke="#fff" stroke-width="3" stroke-linecap="round" stroke-linejoin="round"/></svg>
<svg class="b" style="left:1040.5px;top:956.2px" width="27" height="27" viewBox="0 0 27 27"><path d="M18 0.8L26 8.6M19.6 1.7L2.6 18.9A3.5 3.5 0 0 0 7.5 23.9L24.6 6.7" fill="none" stroke="#6554C0" stroke-width="2.2" stroke-linecap="round" stroke-linejoin="round"/><path d="M4.3 17.1Q8.4 16.5 12.8 17.9" fill="none" stroke="#6554C0" stroke-width="2.1" stroke-linecap="round"/></svg>
<div class="a" style="left:1084.0px;top:940.3px;font-size:25px;line-height:25px;color:#1F5FC4;letter-spacing:0.20px;-webkit-text-stroke:0.25px #1F5FC4;">ATM51-</div>
<div class="a" style="left:1083.0px;top:975.9px;font-size:25px;line-height:25px;color:#1F5FC4;-webkit-text-stroke:0.25px #1F5FC4;">13</div>
<div class="a" style="left:1208.4px;top:957.8px;font-size:25px;line-height:25px;color:#292A2E;letter-spacing:0.58px;-webkit-text-stroke:0.25px #292A2E;">Lockout afte...</div>
<div class="a" style="left:1403.2px;top:957.8px;font-size:25px;line-height:25px;color:#292A2E;letter-spacing:0.46px;-webkit-text-stroke:0.25px #292A2E;">Manual</div>
<div class="a" style="left:1534.3px;top:957.8px;font-size:25px;line-height:25px;color:#292A2E;-webkit-text-stroke:0.25px #292A2E;">-</div>
<svg class="b" style="left:1691.0px;top:963.2px" width="27" height="14" viewBox="0 0 27 14"><path d="M3 3.5L13.3 9.3L23.6 3.5" fill="none" stroke="#4688EC" stroke-width="2.8" stroke-linecap="round" stroke-linejoin="round"/></svg>
<div class="a" style="left:1732.4px;top:957.8px;font-size:25px;line-height:25px;color:#292A2E;letter-spacing:0.10px;-webkit-text-stroke:0.25px #292A2E;">Low</div>
<div class="b" style="left:1885.0px;top:958.2px;width:125.0px;height:28.1px;background:#8FB8F6;border-radius:4px"></div>
<div class="a" style="left:1893.3px;top:962.2px;font-size:20px;line-height:20px;color:#1C2B42;font-weight:700;letter-spacing:-0.46px;">APPROVED</div>
<div class="a" style="left:2040.7px;top:958.0px;font-size:25px;line-height:25px;color:#292A2E;letter-spacing:-0.02px;-webkit-text-stroke:0.25px #292A2E;">ATM / Cash ...</div>
<div class="b" style="left:977.0px;top:1043.0px;width:25.0px;height:25.0px;border:2px solid #8C8F97;border-radius:4px;background:#fff"></div>
<svg class="b" style="left:1040.5px;top:1042.5px" width="27" height="27" viewBox="0 0 27 27"><path d="M18 0.8L26 8.6M19.6 1.7L2.6 18.9A3.5 3.5 0 0 0 7.5 23.9L24.6 6.7" fill="none" stroke="#6554C0" stroke-width="2.2" stroke-linecap="round" stroke-linejoin="round"/><path d="M4.3 17.1Q8.4 16.5 12.8 17.9" fill="none" stroke="#6554C0" stroke-width="2.1" stroke-linecap="round"/></svg>
<div class="a" style="left:1084.0px;top:1026.5px;font-size:25px;line-height:25px;color:#1F5FC4;letter-spacing:0.20px;-webkit-text-stroke:0.25px #1F5FC4;">ATM51-</div>
<div class="a" style="left:1083.0px;top:1062.2px;font-size:25px;line-height:25px;color:#1F5FC4;-webkit-text-stroke:0.25px #1F5FC4;">12</div>
<div class="a" style="left:1209.4px;top:1044.0px;font-size:25px;line-height:25px;color:#292A2E;letter-spacing:0.34px;-webkit-text-stroke:0.25px #292A2E;">Successful ...</div>
<div class="a" style="left:1403.2px;top:1044.0px;font-size:25px;line-height:25px;color:#292A2E;letter-spacing:0.46px;-webkit-text-stroke:0.25px #292A2E;">Manual</div>
<div class="a" style="left:1534.3px;top:1044.0px;font-size:25px;line-height:25px;color:#292A2E;-webkit-text-stroke:0.25px #292A2E;">-</div>
<svg class="b" style="left:1691.0px;top:1049.5px" width="27" height="14" viewBox="0 0 27 14"><path d="M3 3.5L13.3 9.3L23.6 3.5" fill="none" stroke="#4688EC" stroke-width="2.8" stroke-linecap="round" stroke-linejoin="round"/></svg>
<div class="a" style="left:1732.4px;top:1044.0px;font-size:25px;line-height:25px;color:#292A2E;letter-spacing:0.10px;-webkit-text-stroke:0.25px #292A2E;">Low</div>
<div class="b" style="left:1885.0px;top:1044.5px;width:125.0px;height:28.1px;background:#8FB8F6;border-radius:4px"></div>
<div class="a" style="left:1893.3px;top:1048.5px;font-size:20px;line-height:20px;color:#1C2B42;font-weight:700;letter-spacing:-0.46px;">APPROVED</div>
<div class="a" style="left:2040.7px;top:1044.2px;font-size:25px;line-height:25px;color:#292A2E;letter-spacing:-0.02px;-webkit-text-stroke:0.25px #292A2E;">ATM / Cash ...</div>
<div class="b" style="left:924.0px;top:1099.0px;width:1296.0px;height:2.8px;background:#DDDEE1"></div>
<div class="a" style="left:149.5px;top:1365.8px;font-size:25px;line-height:25px;color:#6B6E76;letter-spacing:0.48px;-webkit-text-stroke:0.25px #6B6E76;">Total Work items:</div>
<div class="b" style="left:356.4px;top:1364.0px;width:37.2px;height:27.4px;border:1.5px solid #A9ABB0;border-radius:5px"></div>
<div class="a" style="left:356.4px;top:1364px;width:37.2px;height:27.4px;line-height:28px;text-align:center;font-size:19px;font-weight:700;color:#292A2E">14</div>
<div class="b" style="left:1702.5px;top:1338.6px;width:290.0px;height:56.0px;border:2px solid #DDDEE1;border-radius:6px;background:#fff"></div>
<svg class="b" style="left:1725.0px;top:1353.0px" width="27" height="27" viewBox="0 0 27 27"><path d="M3.5 3.5L23 23M23 3.5L3.5 23" stroke="#505258" stroke-width="2.5"/></svg>
<div class="a" style="left:1763.9px;top:1355.2px;font-size:25px;line-height:25px;color:#505258;letter-spacing:0.63px;-webkit-text-stroke:0.55px #505258;">Remove selection</div>
<div class="b" style="left:2008.2px;top:1338.2px;width:240.8px;height:56.6px;background:#1868DB;border-radius:6px"></div>
<div class="a" style="left:2030.9px;top:1355.2px;font-size:25px;line-height:25px;color:#fff;font-weight:700;letter-spacing:0.21px;">Add selected (4)</div>
</body></html>
